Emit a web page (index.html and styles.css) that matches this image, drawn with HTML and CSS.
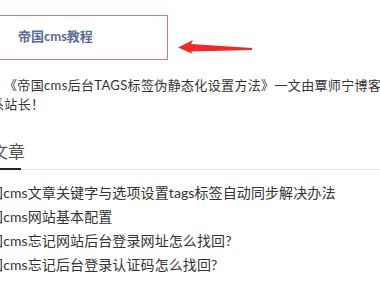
FILE: index.html
```html
<!DOCTYPE html>
<html lang="zh-CN">
<head>
  <meta charset="UTF-8" />
  <meta name="viewport" content="width=device-width, initial-scale=1.0"/>
  <title>帝国cms教程</title>
  <link rel="stylesheet" href="styles.css">
</head>
<body>
  <div class="page">
    <!-- 来源提示 -->
    <div class="source">
      <div class="source-box">帝国cms教程</div>
      <svg class="arrow" width="76" height="16" viewBox="0 0 76 16">
        <polygon points="1,8.5 16,1 14,5 75,9 75,11 14,12.5 16,15" fill="#ef2a2a" />
      </svg>
    </div>

    <p class="intro">《帝国cms后台TAGS标签伪静态化设置方法》一文由覃师宁博客系站长！</p>

    <!-- 相关文章 -->
    <h3 class="tab-title"><span>文章</span></h3>
    <ul class="article-list">
      <li>帝国cms文章关键字与选项设置tags标签自动同步解决办法</li>
      <li>帝国cms网站基本配置</li>
      <li>帝国cms忘记网站后台登录网址怎么找回?</li>
      <li>帝国cms忘记后台登录认证码怎么找回?</li>
    </ul>
  </div>
</body>
</html>
```

FILE: styles.css
```css
body {
  margin: 0;
  padding: 0;
  background: #ffffff;
  font-family: "Lato", "Noto Sans CJK SC", sans-serif;
  color: #333333;
  overflow: hidden;
}

.page {
  margin-left: -27px;
  width: 420px;
  padding-top: 15px;
}

.source {
  display: flex;
  align-items: flex-start;
}

.source-box {
  width: 195px;
  height: 45px;
  box-sizing: border-box;
  border: 1px solid #ee6f6f;
  padding-left: 44px;
  font-size: 13px;
  font-weight: bold;
  line-height: 41px;
  color: #5b6b92;
}

.arrow {
  margin-left: 9px;
  margin-top: 24px;
}

.intro {
  margin: 16px 0 0 0;
  padding-left: 18px;
  width: 413px;
  box-sizing: border-box;
  font-size: 13px;
  line-height: 19px;
  letter-spacing: 0.35px;
  text-indent: 13px;
  color: #333333;
}

.tab-title {
  position: relative;
  margin: 26px 0 0 0;
  padding: 0 0 5px 18px;
  border-bottom: 1px solid #e8e8e8;
  font-size: 17px;
  font-weight: normal;
  line-height: 24px;
  color: #555555;
}

.tab-title::after {
  content: "";
  position: absolute;
  left: 0;
  bottom: -1px;
  width: 48px;
  height: 2px;
  background: #222222;
}

.article-list {
  list-style: none;
  margin: 11px 0 0 0;
  padding: 0 0 0 2px;
}

.article-list li {
  font-size: 14px;
  line-height: 24px;
  letter-spacing: 0.1px;
  color: #333333;
  white-space: nowrap;
}
```
